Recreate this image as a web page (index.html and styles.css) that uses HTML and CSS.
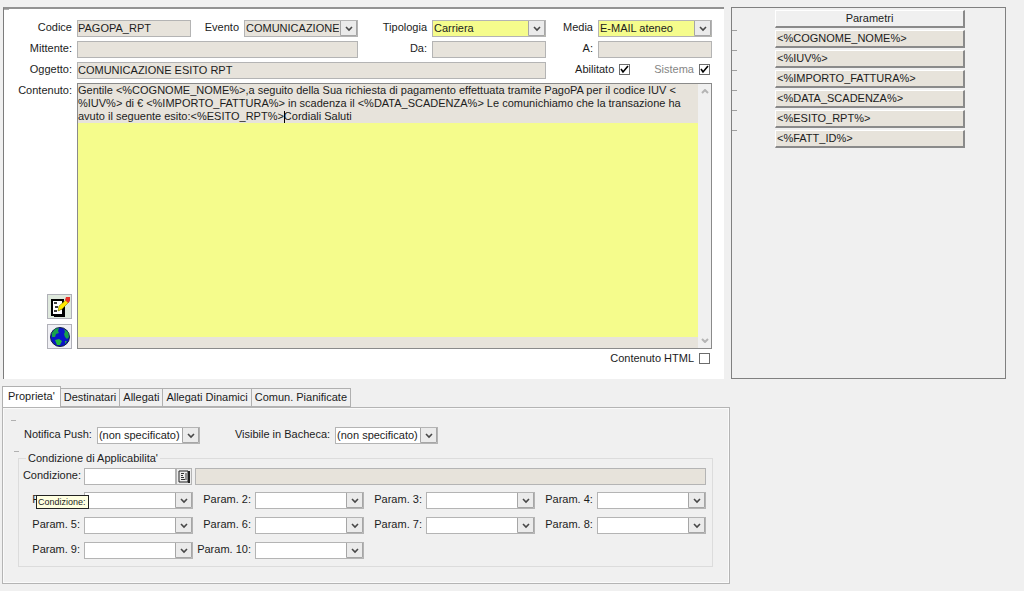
FILE: index.html
```html
<!DOCTYPE html>
<html lang="it">
<head>
<meta charset="utf-8">
<title>Comunicazioni</title>
<link rel="stylesheet" href="styles.css">
</head>
<body>
<main class="page">
  <div class="top">
    <form class="panel message">
      <label for="codice">Codice</label>
      <input class="field" id="codice" value="PAGOPA_RPT" readonly>
      <label for="evento">Evento</label>
      <select class="combo readonly" id="evento"><option>COMUNICAZIONE</option></select>
      <label for="tipologia">Tipologia</label>
      <select class="combo required" id="tipologia"><option>Carriera</option></select>
      <label for="media">Media</label>
      <select class="combo required" id="media"><option>E-MAIL ateneo</option></select>

      <label for="mittente">Mittente:</label>
      <input class="field span3" id="mittente" readonly>
      <label for="da">Da:</label>
      <input class="field" id="da" readonly>
      <label for="a">A:</label>
      <input class="field" id="a" readonly>

      <label for="oggetto">Oggetto:</label>
      <input class="field span5" id="oggetto" value="COMUNICAZIONE ESITO RPT" readonly>
      <div class="checks span2">
        <label class="check">Abilitato <input type="checkbox" checked></label>
        <label class="check muted">Sistema <input type="checkbox" checked></label>
      </div>

      <div class="side">
        <label for="contenuto">Contenuto:</label>
        <div class="tools">
          <button class="tool green" type="button" aria-label="Modifica testo">
            <svg width="20" height="20" viewBox="0 0 20 20">
              <path d="M2 3h11v15H2z" fill="#fff" stroke="#000" stroke-width="2"/>
              <path d="M14 8v11H4" fill="none" stroke="#000" stroke-width="2"/>
              <path d="M4 6h3M5 10h3M4 14h3" stroke="#000" stroke-width="1.500"/>
              <path d="M8 14l2-5 3 3z" fill="#333"/>
              <path d="M8 14l1-5 7-6 3 2-7 7z" fill="#ffe800" stroke="#8a8400" stroke-width=".6"/>
              <path d="M15 3l1-3h4v4l-2 2z" fill="#e8342c"/>
            </svg>
          </button>
          <button class="tool" type="button" aria-label="Lingue">
            <svg width="20" height="20" viewBox="0 0 20 20">
              <circle cx="10" cy="10" r="9.500" fill="#0a14c8" stroke="#102040"/>
              <path d="M2 6l3-4 4-1-1 3 1 2-3 1-1 3-3 0z" fill="#18a04a"/>
              <path d="M14 2l4 3 1 5-2 2-2-2-1-3 1-2z" fill="#18a04a"/>
              <path d="M5 13l4-1 3 2-2 4-3 0z" fill="#22b83c"/>
              <path d="M15 14l2 0-2 3z" fill="#22b83c"/>
            </svg>
          </button>
        </div>
      </div>
      <div class="editor span7">
        <textarea class="text" id="contenuto" spellcheck="false">Gentile &lt;%COGNOME_NOME%&gt;,a seguito della Sua richiesta di pagamento effettuata tramite PagoPA per il codice IUV &lt;
%IUV%&gt; di € &lt;%IMPORTO_FATTURA%&gt; in scadenza il &lt;%DATA_SCADENZA%&gt; Le comunichiamo che la transazione ha
avuto il seguente esito:&lt;%ESITO_RPT%&gt;Cordiali Saluti</textarea>
        <span class="caret"></span>
        <div class="scroll">
          <svg width="8" height="5" viewBox="0 0 8 5"><path d="M1 4l3-3 3 3"/></svg>
          <svg width="8" height="5" viewBox="0 0 8 5"><path d="M1 1l3 3 3-3"/></svg>
        </div>
      </div>
      <div class="checks compact span8">
        <label class="check">Contenuto HTML <input type="checkbox"></label>
      </div>
    </form>

    <section class="panel params">
      <table class="list">
        <thead><tr><td class="gutter"></td><th>Parametri</th></tr></thead>
        <tbody>
          <tr><td class="gutter tick"></td><td class="cell">&lt;%COGNOME_NOME%&gt;</td></tr>
          <tr><td class="gutter tick"></td><td class="cell">&lt;%IUV%&gt;</td></tr>
          <tr><td class="gutter tick"></td><td class="cell">&lt;%IMPORTO_FATTURA%&gt;</td></tr>
          <tr><td class="gutter tick"></td><td class="cell">&lt;%DATA_SCADENZA%&gt;</td></tr>
          <tr><td class="gutter tick"></td><td class="cell">&lt;%ESITO_RPT%&gt;</td></tr>
          <tr><td class="gutter tick"></td><td class="cell">&lt;%FATT_ID%&gt;</td></tr>
        </tbody>
      </table>
    </section>
  </div>

  <div class="bottom">
    <div class="tabs" role="tablist">
      <button class="tab active" role="tab" aria-selected="true">Proprieta'</button>
      <button class="tab" role="tab">Destinatari</button>
      <button class="tab" role="tab">Allegati</button>
      <button class="tab" role="tab">Allegati Dinamici</button>
      <button class="tab" role="tab">Comun. Pianificate</button>
    </div>
    <form class="sheet">
      <div class="options">
        <div class="option">
          <label for="push">Notifica Push:</label>
          <select class="combo" id="push"><option>(non specificato)</option></select>
        </div>
        <div class="option">
          <label for="bacheca">Visibile in Bacheca:</label>
          <select class="combo" id="bacheca"><option>(non specificato)</option></select>
        </div>
      </div>
      <fieldset class="group">
        <legend>Condizione di Applicabilita'</legend>
        <div class="condition">
          <label for="condizione">Condizione:</label>
          <input class="field editable code" id="condizione">
          <button class="lookup" type="button" aria-label="Elenco condizioni">
            <svg width="12" height="13" viewBox="0 0 12 13">
              <path d="M1 1h9v11H1z" fill="#eee" stroke="#222"/>
              <path d="M11 1v12" stroke="#222" stroke-width="2"/>
              <path d="M3 3.500h3M3 5.500h2M3 7.500h3M3 9.500h4M8 3v7" stroke="#333"/>
            </svg>
          </button>
          <input class="field description" aria-label="Descrizione condizione" readonly>
        </div>
        <div class="grid">
          <div class="first">
            <label for="p1">Param. 1:</label>
            <span class="tip" role="tooltip">Condizione:</span>
          </div>
          <select class="combo" id="p1"></select>
          <label for="p2">Param. 2:</label><select class="combo" id="p2"></select>
          <label for="p3">Param. 3:</label><select class="combo" id="p3"></select>
          <label for="p4">Param. 4:</label><select class="combo" id="p4"></select>
          <label for="p5">Param. 5:</label><select class="combo" id="p5"></select>
          <label for="p6">Param. 6:</label><select class="combo" id="p6"></select>
          <label for="p7">Param. 7:</label><select class="combo" id="p7"></select>
          <label for="p8">Param. 8:</label><select class="combo" id="p8"></select>
          <label for="p9">Param. 9:</label><select class="combo" id="p9"></select>
          <label for="p10">Param. 10:</label><select class="combo" id="p10"></select>
        </div>
      </fieldset>
    </form>
  </div>
</main>
</body>
</html>
```

FILE: styles.css
```css
* {
  box-sizing: border-box;
}

body {
  margin: 0;
  background: #f0f0f0;
  color: #1c1c1c;
  font: 11px/15px "Liberation Sans", Arial, sans-serif;
}

input,
select,
textarea,
button {
  margin: 0;
  border-radius: 0;
  color: inherit;
  font: inherit;
}

label {
  text-align: right;
  white-space: nowrap;
}

.page {
  padding: 7px 18px 7px 2px;
}

.top {
  display: grid;
  grid-template-columns: 721fr 275fr;
  gap: 7px;
  padding-left: 1px;
}

/* Shared controls */
.field,
.combo {
  width: 100%;
  min-width: 0;
  height: 17px;
  padding: 0 0 2px;
  border: 1px solid #b4b4b4;
  background-color: #e7e3db;
  outline: none;
}

.editable {
  background-color: #fff;
}

.combo {
  appearance: none;
  padding: 0 18px 1px 1px;
  background: #fff url("data:image/svg+xml,%3Csvg xmlns='http://www.w3.org/2000/svg' width='17' height='15'%3E%3Cpath d='M.5-.5h16v15H.5z' fill='%23ebebeb' stroke='%23a6a6a6'/%3E%3Cpath d='M6 6l3 3 3-3' fill='none' stroke='%23484848' stroke-width='1.6'/%3E%3C/svg%3E") right top no-repeat;
}

.combo.readonly {
  background-color: #e7e3db;
}

.combo.required {
  background-color: #f5fc8c;
}

.check {
  display: flex;
  align-items: center;
  gap: 5px;
}

.check input {
  appearance: none;
  width: 11px;
  height: 11px;
  border: 1px solid #6c6c6c;
  background: #fff;
}

.check input:checked {
  background: #fff url("data:image/svg+xml,%3Csvg xmlns='http://www.w3.org/2000/svg' width='9' height='9'%3E%3Cpath d='M1 4l2 3 5-6' fill='none' stroke='%23000' stroke-width='1.6'/%3E%3C/svg%3E") center no-repeat;
}

.muted {
  color: #858585;
}

/* Message form */
.message {
  display: grid;
  grid-template-columns: 68px 1fr 43px 1fr 64px 1fr 42px 1fr;
  gap: 4px 5px;
  align-content: start;
  padding: 11px 12px 15px 0;
  border-top: 2px solid #929292;
  border-left: 1px solid #7c7c7c;
  background: linear-gradient(#b0b0b0, #b0b0b0) left top / 5px 1px no-repeat, #fff;
}

.span2 { grid-column: span 2; }
.span3 { grid-column: span 3; }
.span5 { grid-column: span 5; }
.span7 { grid-column: span 7; }
.span8 { grid-column: span 8; }

.checks {
  display: flex;
  align-items: flex-start;
  justify-content: flex-end;
  gap: 24px;
  padding-right: 2px;
}

.compact {
  line-height: 11px;
}

.side {
  display: flex;
  flex-direction: column;
  justify-content: space-between;
}

.tools {
  display: flex;
  flex-direction: column;
  align-items: flex-end;
  gap: 5px;
}

.tool {
  display: flex;
  align-items: center;
  justify-content: center;
  width: 25px;
  height: 25px;
  padding: 0;
  border: 1px solid #b0b0b8;
  background: #f0f0f4;
}

.tool.green {
  background: #dfe9dd;
}

.editor {
  position: relative;
  display: flex;
  min-height: 266px;
  border: 1px solid #8a8a8a;
}

.text {
  flex: 1;
  padding: 0;
  border: 0;
  outline: none;
  resize: none;
  overflow: hidden;
  line-height: 13px;
  white-space: pre;
  background:
    linear-gradient(#e7e3db, #e7e3db) top / 100% 39px no-repeat,
    linear-gradient(#e7e3db, #e7e3db) bottom / 100% 11px no-repeat,
    #f5fc8c;
}

.caret {
  position: absolute;
  top: 27px;
  left: 206px;
  width: 1px;
  height: 12px;
  background: #000;
}

.scroll {
  display: flex;
  flex-direction: column;
  justify-content: space-between;
  align-items: center;
  width: 13px;
  padding: 5px 0;
  background: #f0f0f0;
}

.scroll path {
  fill: none;
  stroke: #b4b4b4;
  stroke-width: 2;
}

/* Parameter list */
.params {
  padding: 0 40px 0 0;
  border: 1px solid #808080;
}

.list {
  width: 100%;
  border-spacing: 0 2px;
  line-height: 14px;
}

.list th,
.list .cell {
  height: 18px;
  padding: 0 1px 1px;
  border: 1px solid #fff;
  border-right: 2px solid #8a8a8a;
  border-bottom: 2px solid #8a8a8a;
  font-weight: normal;
}

.list .cell {
  background: #e7e3db;
}

.gutter {
  width: 43px;
  padding: 0;
}

.tick {
  background: linear-gradient(#a0a0a0, #a0a0a0) left top / 5px 1px no-repeat;
}

/* Tabbed sheet */
.bottom {
  width: 72.5%;
  margin-top: 7px;
}

.tabs {
  display: flex;
  align-items: flex-end;
}

.tab {
  height: 19px;
  padding: 0 3px;
  border: 1px solid #b0b0b0;
  border-left: 0;
  background: #f0f0f0;
  line-height: 17px;
}

.tab.active {
  height: 21px;
  padding: 0 5px 2px;
  border-left: 1px solid #b0b0b0;
  border-bottom: 0;
  background: #fff;
}

.sheet {
  padding: 19px 16px 16px 15px;
  border: 1px solid #b4b4b4;
  box-shadow: inset 0 0 0 1px #fafafa;
  background:
    linear-gradient(#b0b0b0, #b0b0b0) 8px 12px / 5px 1px no-repeat,
    linear-gradient(#b0b0b0, #b0b0b0) 11px 43px / 5px 1px no-repeat,
    #f0f0f0;
}

.options {
  display: flex;
  gap: 35px;
  padding-left: 6px;
}

.option {
  display: flex;
  gap: 5px;
}

.option .combo {
  width: 103px;
}

.group {
  min-width: 0;
  margin: 7px 0 0;
  padding: 2px 6px 7px 3px;
  border: 1px solid #dcdcdc;
}

.group legend {
  margin-left: 4px;
  padding: 0 2px;
}

.condition {
  display: flex;
  gap: 3px;
}

.condition label {
  width: 59px;
}

.condition .code {
  width: 92px;
}

.lookup {
  display: flex;
  align-items: center;
  justify-content: center;
  width: 16px;
  height: 17px;
  margin-left: -3px;
  padding: 0;
  border: 1px solid #b4b4b4;
  background: #ececec;
}

.condition .description {
  flex: 1;
}

.grid {
  display: grid;
  grid-template-columns: 58px 1fr 54px 1fr 54px 1fr 54px 1fr;
  gap: 8px 4px;
  margin-top: 7px;
}

.first {
  position: relative;
  text-align: right;
}

.tip {
  position: absolute;
  top: 3px;
  left: 14px;
  width: 53px;
  padding: 0 1px;
  border: 1px solid #222;
  background: #ffffe1;
  font-size: 9px;
  line-height: 12px;
  text-align: left;
}
```
